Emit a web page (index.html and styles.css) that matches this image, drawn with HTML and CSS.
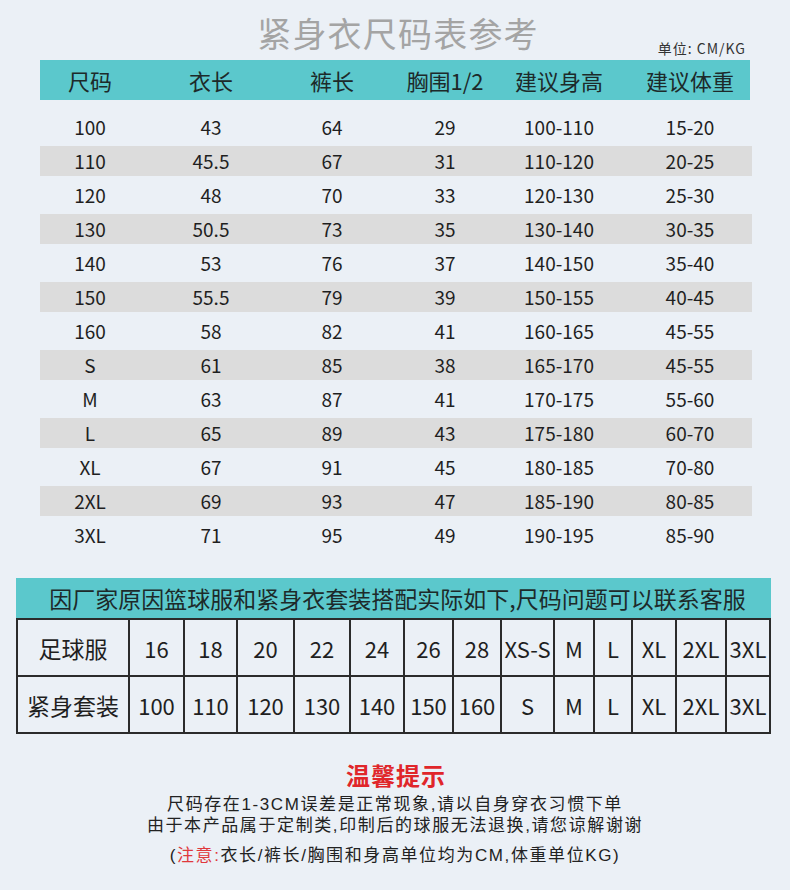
FILE: index.html
```html
<!DOCTYPE html>
<html lang="zh-CN">
<head>
<meta charset="utf-8">
<title>紧身衣尺码表参考</title>
<link rel="stylesheet" href="styles.css">
</head>
<body>
<div class="page">
  <div class="top">
    <div></div>
    <h1 class="title">紧身衣尺码表参考</h1>
    <div class="unit">单位: CM/KG</div>
  </div>

  <div class="size-table">
    <div class="row head">
      <div>尺码</div><div>衣长</div><div>裤长</div><div>胸围1/2</div><div>建议身高</div><div class="last">建议体重</div>
    </div>
    <div class="body">
      <div class="row"><div>100</div><div>43</div><div>64</div><div>29</div><div>100-110</div><div class="last">15-20</div></div>
      <div class="row alt"><div>110</div><div>45.5</div><div>67</div><div>31</div><div>110-120</div><div class="last">20-25</div></div>
      <div class="row"><div>120</div><div>48</div><div>70</div><div>33</div><div>120-130</div><div class="last">25-30</div></div>
      <div class="row alt"><div>130</div><div>50.5</div><div>73</div><div>35</div><div>130-140</div><div class="last">30-35</div></div>
      <div class="row"><div>140</div><div>53</div><div>76</div><div>37</div><div>140-150</div><div class="last">35-40</div></div>
      <div class="row alt"><div>150</div><div>55.5</div><div>79</div><div>39</div><div>150-155</div><div class="last">40-45</div></div>
      <div class="row"><div>160</div><div>58</div><div>82</div><div>41</div><div>160-165</div><div class="last">45-55</div></div>
      <div class="row alt"><div>S</div><div>61</div><div>85</div><div>38</div><div>165-170</div><div class="last">45-55</div></div>
      <div class="row"><div>M</div><div>63</div><div>87</div><div>41</div><div>170-175</div><div class="last">55-60</div></div>
      <div class="row alt"><div>L</div><div>65</div><div>89</div><div>43</div><div>175-180</div><div class="last">60-70</div></div>
      <div class="row"><div>XL</div><div>67</div><div>91</div><div>45</div><div>180-185</div><div class="last">70-80</div></div>
      <div class="row alt"><div>2XL</div><div>69</div><div>93</div><div>47</div><div>185-190</div><div class="last">80-85</div></div>
      <div class="row"><div>3XL</div><div>71</div><div>95</div><div>49</div><div>190-195</div><div class="last">85-90</div></div>
    </div>
  </div>

  <div class="match">
    <div class="match-bar">因厂家原因篮球服和紧身衣套装搭配实际如下,尺码问题可以联系客服</div>
    <table class="match-table">
      <colgroup>
        <col style="width:112px"><col style="width:55px"><col style="width:53px"><col style="width:57px"><col style="width:56px"><col style="width:54px"><col style="width:49px"><col style="width:48px"><col style="width:53px"><col style="width:40px"><col style="width:38px"><col style="width:44px"><col style="width:50px"><col style="width:44px">
      </colgroup>
      <tr>
        <th>足球服</th><td>16</td><td>18</td><td>20</td><td>22</td><td>24</td><td>26</td><td>28</td><td>XS-S</td><td>M</td><td>L</td><td>XL</td><td>2XL</td><td>3XL</td>
      </tr>
      <tr>
        <th>紧身套装</th><td>100</td><td>110</td><td>120</td><td>130</td><td>140</td><td>150</td><td>160</td><td>S</td><td>M</td><td>L</td><td>XL</td><td>2XL</td><td>3XL</td>
      </tr>
    </table>
  </div>

  <div class="tips">
    <div class="tips-title">温馨提示</div>
    <p class="tip">尺码存在1-3CM误差是正常现象,请以自身穿衣习惯下单</p>
    <p class="tip">由于本产品属于定制类,印制后的球服无法退换,请您谅解谢谢</p>
    <p class="tip note">(<span class="red">注意:</span>衣长/裤长/胸围和身高单位均为CM,体重单位KG)</p>
  </div>
</div>
</body>
</html>
```

FILE: styles.css
```css
* { box-sizing: border-box; }

body {
  margin: 0;
  background: #ebf0f6;
  font-family: "Noto Sans CJK SC", "Noto Sans", sans-serif;
  color: #1f1f1f;
}

.page {
  width: 790px;
  height: 890px;
  overflow: hidden;
}

.top {
  height: 60px;
  display: grid;
  grid-template-columns: 1fr auto 1fr;
}

.title {
  margin: 0;
  padding: 13px 0 0 6px;
  font-size: 34px;
  line-height: 40px;
  font-weight: 400;
  letter-spacing: 1.2px;
  color: #a4a4a4;
}

.unit {
  justify-self: end;
  align-self: end;
  margin: 0 44px 4px 0;
  font-size: 14px;
  line-height: 16px;
  letter-spacing: 1px;
  color: #333;
}

.size-table {
  margin: 0 40px;
}

.row {
  display: grid;
  grid-template-columns: 100px 142px 100px 126px 102px 140px;
  align-items: center;
  text-align: center;
}

.row .last { padding-left: 20px; }

.head {
  height: 40px;
  background: #5bc8cc;
  font-size: 22px;
  color: #1d2a2a;
}

.body {
  margin-top: 12px;
  display: grid;
  grid-auto-rows: 30px;
  row-gap: 4px;
}

.body .row {
  font-size: 19px;
  line-height: 30px;
  margin-right: -2px;
}

.body .row.alt { background: #dcdcdc; }

.match {
  margin: 28px 19px 0 16px;
}

.match-bar {
  height: 40px;
  background: #5bc8cc;
  font-size: 23px;
  line-height: 40px;
  text-align: center;
  padding-left: 8px;
  color: #1d2a2a;
}

.match-table {
  width: 753px;
  table-layout: fixed;
  border-collapse: collapse;
}

.match-table th,
.match-table td {
  height: 57px;
  padding: 0;
  border: 2px solid #2b2b2b;
  text-align: center;
  font-size: 22px;
  font-weight: 400;
  white-space: nowrap;
}

.match-table th { font-size: 23px; }

.tips {
  margin-top: 27px;
  text-align: center;
}

.tips-title {
  font-size: 24px;
  line-height: 28px;
  font-weight: 700;
  color: #e0262a;
  letter-spacing: 1px;
  padding-left: 2px;
}

.tip {
  margin: 0;
  font-family: "Liberation Sans", "Noto Sans CJK SC", sans-serif;
  font-size: 17px;
  line-height: 21px;
  letter-spacing: 1.6px;
  color: #222;
}

.tips-title + .tip { margin-top: 5px; }

.tip.note { margin-top: 9px; }

.red { color: #e0383c; }
```
